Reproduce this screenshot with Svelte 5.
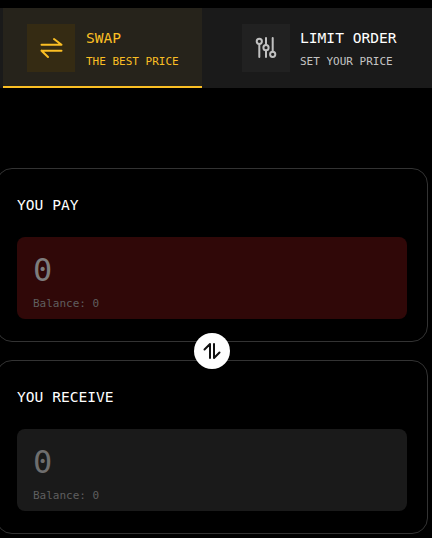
<script>
  const tabs = [
    { title: 'SWAP', sub: 'THE BEST PRICE', active: true },
    { title: 'LIMIT ORDER', sub: 'SET YOUR PRICE', active: false }
  ];
  const cards = [
    { label: 'YOU PAY', tone: 'pay' },
    { label: 'YOU RECEIVE', tone: 'receive' }
  ];
</script>

<main class="page">
  <nav class="tabs">
    {#each tabs as tab}
      <div class="tab" class:active={tab.active}>
        <div class="icon">
          {#if tab.active}
            <svg width="24" height="24" viewBox="0 0 24 24" fill="none" stroke="currentColor" stroke-width="2" stroke-linecap="round" stroke-linejoin="round">
              <path d="M2.500 8.700h20M15 3l7.500 5.700M22.500 14.700h-20M9 21l-6.500-6.300" />
            </svg>
          {:else}
            <svg width="24" height="24" viewBox="0 0 24 24" fill="none" stroke="currentColor" stroke-width="2" stroke-linecap="round">
              <circle cx="5.300" cy="5.300" r="2.600" />
              <circle cx="12" cy="11.700" r="2.600" />
              <circle cx="18.700" cy="18.300" r="2.600" />
              <path d="M5.300 8v13M12 2v7M12 14.400V21M18.700 2v13.600" />
            </svg>
          {/if}
        </div>
        <div class="text">
          <div class="title">{tab.title}</div>
          <div class="sub">{tab.sub}</div>
        </div>
      </div>
    {/each}
  </nav>

  <section class="cards">
    {#each cards as card, i}
      <div class="card">
        <div class="label">{card.label}</div>
        <div class="panel {card.tone}">
          <div class="amount">0</div>
          <div class="balance">Balance: 0</div>
        </div>
      </div>
      {#if i === 0}
        <div class="switch">
          <button class="flip" aria-label="Switch">
            <svg width="20" height="20" viewBox="0 0 20 20" fill="none" stroke="#111" stroke-width="2" stroke-linecap="round" stroke-linejoin="round">
              <path d="M8 17V3L2.500 8.500M12 3v14l5.500-5.500" />
            </svg>
          </button>
        </div>
      {/if}
    {/each}
  </section>
</main>

<style>
  :global(body) {
    margin: 0;
    background: #000;
  }
  .page {
    font-family: "DejaVu Sans Mono", monospace;
    width: 432px;
    height: 538px;
    overflow: hidden;
    padding-top: 8px;
    box-sizing: border-box;
  }
  .tabs {
    display: flex;
    height: 80px;
    padding-left: 3px;
    background: #1a1a1a;
  }
  .tab {
    flex: 1;
    display: flex;
    align-items: center;
    gap: 10px;
    padding-left: 40px;
    box-sizing: border-box;
  }
  .tab.active {
    flex: none;
    width: 199px;
    gap: 11px;
    padding-left: 24px;
    background: #26231b;
    border-bottom: 2px solid #fbbf24;
    padding-top: 2px;
  }
  .icon {
    width: 48px;
    height: 48px;
    flex: none;
    display: flex;
    align-items: center;
    justify-content: center;
    background: #212121;
    color: #c0c0c0;
  }
  .active .icon {
    background: #352b13;
    color: #fbbf24;
  }
  .text {
    display: flex;
    flex-direction: column;
    gap: 6px;
    padding-top: 1px;
  }
  .title {
    font-size: 14.6px;
    line-height: 20px;
    color: #fff;
  }
  .sub {
    font-size: 11px;
    line-height: 16px;
    color: #c4c4c4;
  }
  .active .title,
  .active .sub {
    color: #fbbf24;
  }
  .cards {
    margin-top: 80px;
    margin-left: -4px;
    width: 432px;
    display: flex;
    flex-direction: column;
  }
  .card {
    box-sizing: border-box;
    height: 174px;
    border: 1px solid #333;
    border-radius: 16px;
    padding: 26px 20px 0;
  }
  .label {
    font-size: 14.6px;
    line-height: 20px;
    color: #fff;
  }
  .panel {
    margin-top: 22px;
    height: 82px;
    border-radius: 8px;
    padding: 13px 16px 0;
    box-sizing: border-box;
  }
  .pay {
    background: #300808;
  }
  .receive {
    background: #1a1a1a;
  }
  .amount {
    font-size: 32px;
    line-height: 40px;
    color: #7d7d7d;
  }
  .receive .amount {
    color: #6e6e6e;
  }
  .balance {
    font-size: 11px;
    line-height: 16px;
    margin-top: 6px;
    color: #5f5f5f;
  }
  .switch {
    height: 18px;
    position: relative;
  }
  .flip {
    position: absolute;
    left: 198px;
    top: -9px;
    width: 36px;
    height: 36px;
    padding: 0;
    border: 0;
    border-radius: 50%;
    background: #fff;
    display: flex;
    align-items: center;
    justify-content: center;
  }
</style>
